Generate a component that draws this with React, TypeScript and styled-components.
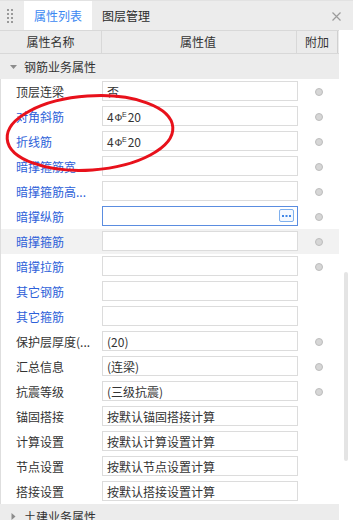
import * as React from 'react';
import styled, { createGlobalStyle } from 'styled-components';

const GlobalStyle = createGlobalStyle`
	body {
		margin: 0;
		background: #ffffff;
		font-family: 'Noto Sans CJK SC', 'Noto Sans', sans-serif;
		font-size: 12px;
		color: #333333;
	}
`;

interface IRow {
	label: string;
	value?: React.ReactNode;
	blue?: boolean;
	radio?: boolean;
	focused?: boolean;
	hover?: boolean;
}

const Rebar = () => (
	<span>
		4<Mark>Φ</Mark>
		<Sup>E</Sup>20
	</span>
);

const rows: IRow[] = [
	{ label: '顶层连梁', value: '否', radio: true },
	{ label: '对角斜筋', value: <Rebar />, blue: true, radio: true },
	{ label: '折线筋', value: <Rebar />, blue: true, radio: true },
	{ label: '暗撑箍筋宽...', blue: true, radio: true },
	{ label: '暗撑箍筋高...', blue: true, radio: true },
	{ label: '暗撑纵筋', blue: true, radio: true, focused: true },
	{ label: '暗撑箍筋', blue: true, radio: true, hover: true },
	{ label: '暗撑拉筋', blue: true, radio: true },
	{ label: '其它钢筋', blue: true },
	{ label: '其它箍筋', blue: true },
	{ label: '保护层厚度(...', value: '(20)', radio: true },
	{ label: '汇总信息', value: '(连梁)', radio: true },
	{ label: '抗震等级', value: '(三级抗震)', radio: true },
	{ label: '锚固搭接', value: '按默认锚固搭接计算' },
	{ label: '计算设置', value: '按默认计算设置计算' },
	{ label: '节点设置', value: '按默认节点设置计算' },
	{ label: '搭接设置', value: '按默认搭接设置计算' },
];

export default function App() {
	return (
		<Panel>
			<GlobalStyle />
			<TabBar>
				<Grip width="6" height="15" viewBox="0 0 6 15">
					{[0, 4, 8, 12].map(y => (
						<g key={y} fill="#9a9a9a">
							<rect x="0" y={y} width="2" height="2" />
							<rect x="4" y={y} width="2" height="2" />
						</g>
					))}
				</Grip>
				<Tab active>属性列表</Tab>
				<Tab>图层管理</Tab>
				<Close width="9" height="9" viewBox="0 0 9 9">
					<path d="M0.5 0.5 L8.5 8.5 M8.5 0.5 L0.5 8.5" stroke="#9b9b9b" strokeWidth="1.2" />
				</Close>
			</TabBar>
			<Body>
				<Table>
					<HeaderRow>
						<HeadCell>属性名称</HeadCell>
						<HeadCell>属性值</HeadCell>
						<HeadCell last>附加</HeadCell>
					</HeaderRow>
					<Category>
						<Caret width="7" height="4" viewBox="0 0 7 4">
							<path d="M0 0 L7 0 L3.5 4 Z" fill="#8c8c8c" />
						</Caret>
						钢筋业务属性
					</Category>
					{rows.map(r => (
						<Row key={r.label} hover={r.hover}>
							<Label blue={r.blue}>{r.label}</Label>
							<ValueCell>
								<ValueBox focused={r.focused}>
									{r.value}
									{r.focused && (
										<MoreBtn>
											<svg width="9" height="2" viewBox="0 0 9 2">
												<rect x="0" y="0" width="2" height="2" fill="#3f86e6" />
												<rect x="3.5" y="0" width="2" height="2" fill="#3f86e6" />
												<rect x="7" y="0" width="2" height="2" fill="#3f86e6" />
											</svg>
										</MoreBtn>
									)}
								</ValueBox>
							</ValueCell>
							<RadioCell>{r.radio && <Radio />}</RadioCell>
						</Row>
					))}
					<Category>
						<Caret width="4" height="7" viewBox="0 0 4 7">
							<path d="M0 0 L4 3.5 L0 7 Z" fill="#8c8c8c" />
						</Caret>
						土建业务属性
					</Category>
				</Table>
				<ScrollTrack>
					<Thumb />
				</ScrollTrack>
			</Body>
			<Annotation width="353" height="520" viewBox="0 0 353 520">
				<ellipse
					cx="90"
					cy="133"
					rx="83"
					ry="37"
					transform="rotate(-4 90 133)"
					fill="none"
					stroke="#e8111b"
					strokeWidth="3"
				/>
			</Annotation>
		</Panel>
	);
}

const Panel = styled.div`
	position: relative;
	width: 353px;
	height: 520px;
	overflow: hidden;
	background: #ffffff;
`;

const TabBar = styled.div`
	display: flex;
	align-items: flex-end;
	height: 30px;
	box-sizing: border-box;
	padding: 1px 0 0 0;
	background: #ececec;
	border-top: 1px solid #e2e2e2;
`;

const Grip = styled.svg`
	align-self: center;
	margin: 0 11px 0 7px;
`;

const Tab = styled.div<{ active?: boolean }>`
	height: 29px;
	line-height: 29px;
	padding: 0 10px;
	font-size: 12px;
	color: ${p => (p.active ? '#3c88f2' : '#2b2b2b')};
	background: ${p => (p.active ? '#ffffff' : 'transparent')};
`;

const Close = styled.svg`
	align-self: center;
	margin: 0 12px 0 auto;
`;

const Body = styled.div`
	display: flex;
`;

const Table = styled.div`
	width: 339px;
	border-left: 1px solid #dedede;
	box-sizing: border-box;
`;

const grid = `
	display: grid;
	grid-template-columns: 100px 197px 41px;
`;

const HeaderRow = styled.div`
	${grid};
	height: 24px;
	box-sizing: border-box;
	margin-left: -1px;
	background: #ebebeb;
	border-top: 1px solid #d8d8d8;
	border-bottom: 1px solid #d8d8d8;
`;

const HeadCell = styled.div<{ last?: boolean }>`
	text-align: center;
	line-height: 22px;
	color: #333333;
	border-right: 1px solid ${p => (p.last ? '#d0d0d0' : '#d8d8d8')};
	&:first-child {
		width: 101px;
	}
`;

const Category = styled.div`
	display: flex;
	align-items: center;
	gap: 7px;
	height: 25px;
	margin-left: -1px;
	padding-left: 10px;
	box-sizing: border-box;
	background: #ececec;
	color: #333333;
`;

const Caret = styled.svg`
	flex: none;
	width: 7px;
`;

const Row = styled.div<{ hover?: boolean }>`
	${grid};
	height: 25px;
	background: ${p => (p.hover ? '#f2f2f2' : 'transparent')};
`;

const Label = styled.div<{ blue?: boolean }>`
	padding-left: 15px;
	line-height: 25px;
	white-space: nowrap;
	color: ${p => (p.blue ? '#2d5fd9' : '#333333')};
`;

const ValueCell = styled.div`
	padding: 2px 0 3px 1px;
`;

const ValueBox = styled.div<{ focused?: boolean }>`
	position: relative;
	display: flex;
	align-items: center;
	height: 20px;
	box-sizing: border-box;
	padding-left: 4px;
	background: #ffffff;
	border: 1px solid ${p => (p.focused ? '#5b8de0' : '#dcdcdc')};
	color: #333333;
	white-space: nowrap;
	overflow: hidden;
	font-size: 12px;
`;

const Mark = styled.span`
	display: inline-block;
	margin-left: 1px;
	font-family: 'Liberation Serif', serif;
	font-size: 10px;
	font-weight: normal;
	vertical-align: 1px;
`;

const Sup = styled.sup`
	font-family: 'Liberation Sans', sans-serif;
	font-size: 7px;
	vertical-align: 5px;
	margin-right: 1px;
`;

const MoreBtn = styled.div`
	position: absolute;
	right: 3px;
	top: 2px;
	display: flex;
	align-items: center;
	justify-content: center;
	width: 15px;
	height: 13px;
	box-sizing: border-box;
	border: 1px solid #7fb0ee;
	border-radius: 2px;
	background: #f4f9ff;
`;

const RadioCell = styled.div`
	display: flex;
	align-items: center;
	justify-content: center;
`;

const Radio = styled.div`
	width: 8px;
	height: 8px;
	box-sizing: border-box;
	border-radius: 50%;
	background: #d6d6d6;
	border: 1px solid #bdbdbd;
`;

const ScrollTrack = styled.div`
	width: 14px;
	padding-top: 242px;
	padding-left: 5px;
	box-sizing: border-box;
`;

const Thumb = styled.div`
	width: 4px;
	height: 189px;
	border-radius: 2px;
	background: #e4e4e4;
`;

const Annotation = styled.svg`
	position: absolute;
	left: 0;
	top: 0;
	pointer-events: none;
`;
